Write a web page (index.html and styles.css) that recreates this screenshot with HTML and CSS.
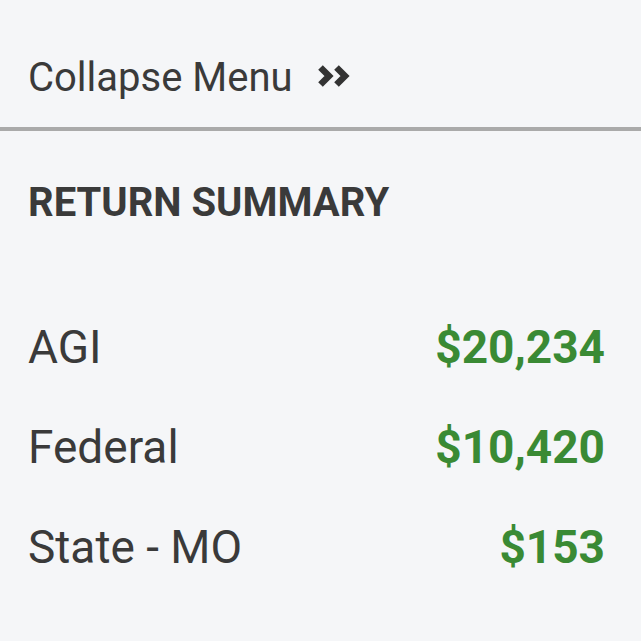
FILE: index.html
```html
<!DOCTYPE html>
<html>
<head>
<meta charset="utf-8">
<link rel="stylesheet" href="styles.css">
</head>
<body>
<div class="panel">
  <div class="collapse">
    <span class="collapse-label">Collapse Menu</span>
    <svg class="chev" width="34" height="22" viewBox="0 0 34 22">
      <path d="M3.5 2.5 L12 11 L3.5 19.5" fill="none" stroke="#333" stroke-width="6.5" stroke-linejoin="miter" stroke-linecap="butt"/>
      <path d="M19.5 2.5 L28 11 L19.5 19.5" fill="none" stroke="#333" stroke-width="6.5" stroke-linejoin="miter" stroke-linecap="butt"/>
    </svg>
  </div>
  <div class="divider"></div>
  <div class="summary">
    <h2 class="title">RETURN SUMMARY</h2>
    <div class="row"><span class="label">AGI</span><span class="value">$20,234</span></div>
    <div class="row"><span class="label">Federal</span><span class="value">$10,420</span></div>
    <div class="row"><span class="label">State - MO</span><span class="value">$153</span></div>
  </div>
</div>
</body>
</html>
```
FILE: styles.css
```css
html, body {
  margin: 0;
  padding: 0;
  background: #f5f6f8;
}
body {
  font-family: Roboto, "Liberation Sans", sans-serif;
  color: #3a3a3a;
  width: 641px;
  height: 641px;
  overflow: hidden;
}
.collapse {
  display: flex;
  align-items: flex-start;
  height: 73px;
  padding: 54px 0 0 28px;
  gap: 24px;
}
.collapse-label {
  font-size: 40px;
}
.chev {
  display: block;
  margin-top: 11px;
}
.divider {
  height: 4px;
  background: #aaaaaa;
}
.summary {
  padding: 0 36px 0 28px;
}
.title {
  margin: 0 0 93px 0;
  padding-top: 48px;
  font-size: 40px;
  font-weight: 700;
  line-height: 48px;
}
.row {
  display: flex;
  justify-content: space-between;
  align-items: baseline;
  height: 100px;
  font-size: 46px;
  line-height: 54px;
}
.value {
  font-weight: 700;
  color: #3a8a34;
  font-size: 46px;
}
```
